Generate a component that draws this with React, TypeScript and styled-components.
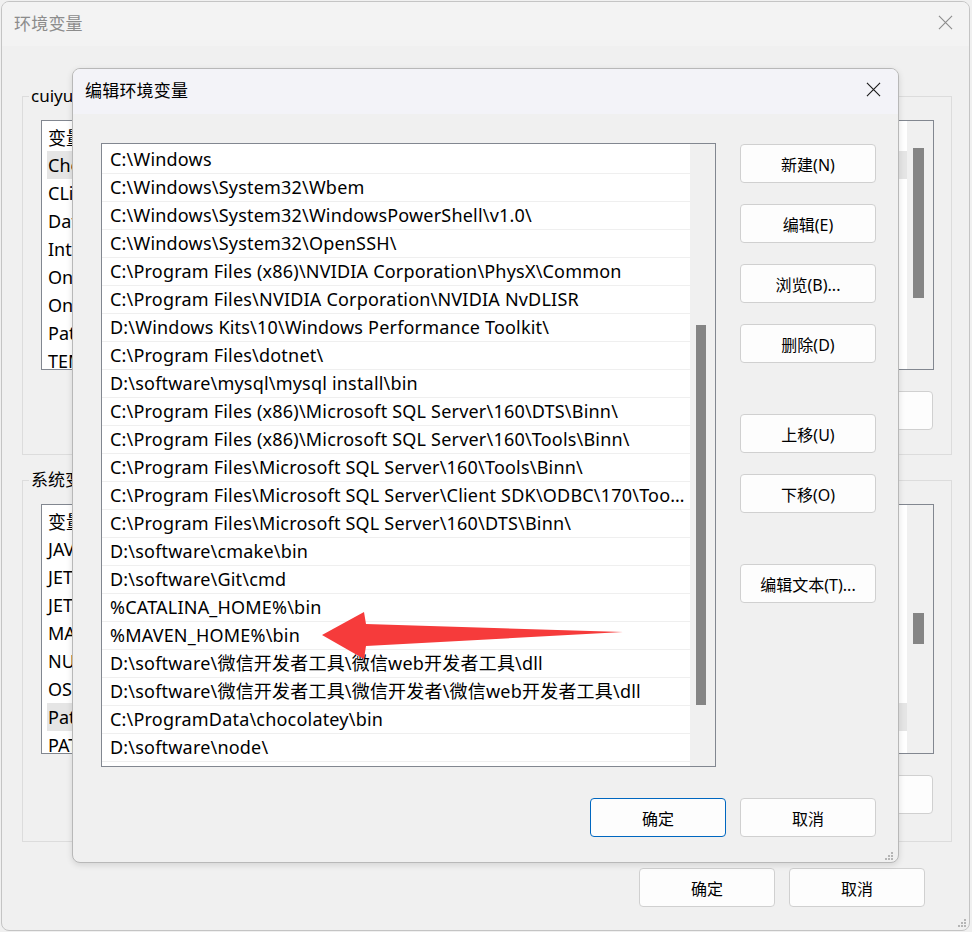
import * as React from 'react'
import styled, { createGlobalStyle } from 'styled-components'

const FONT = '"Noto Sans", "Noto Sans CJK SC", sans-serif'

const GlobalStyle = createGlobalStyle`
  html, body {
    margin: 0;
    padding: 0;
    background: #f0f0f0;
  }
  body {
    font-family: ${FONT};
    color: #000;
  }
  * { box-sizing: border-box; }
`

const Screen = styled.div`
  position: relative;
  width: 972px;
  height: 932px;
  overflow: hidden;
  padding: 1px 0 0 1px;
  background: #f0f0f0;
`

// ---------- outer window (环境变量) ----------

const OuterWindow = styled.div`
  width: 969px;
  height: 930px;
  border: 1px solid #c4c4c4;
  border-radius: 8px;
  background: #f0f0f0;
  display: flex;
  flex-direction: column;
  overflow: hidden;
`

const TitleBar = styled.div<{ $tint: string; $h: number; $pr: number }>`
  height: ${(p) => p.$h}px;
  flex: none;
  display: flex;
  align-items: center;
  justify-content: space-between;
  background: ${(p) => p.$tint};
  padding: 0 ${(p) => p.$pr}px 4px 12px;
`

const TitleText = styled.span<{ $color: string }>`
  font-size: 17px;
  color: ${(p) => p.$color};
  letter-spacing: 0.2px;
`

const CloseIcon = ({ color, size }: { color: string; size: number }) => (
  <svg width={size} height={size} viewBox="0 0 16 16">
    <path d="M1 1 L15 15 M15 1 L1 15" stroke={color} strokeWidth="1.2" fill="none" />
  </svg>
)

const OuterBody = styled.div`
  flex: 1;
  display: flex;
  flex-direction: column;
  padding: 50px 17px 0 20px;
`

const Group = styled.div<{ $h: number; $mt: number }>`
  position: relative;
  height: ${(p) => p.$h}px;
  margin-top: ${(p) => p.$mt}px;
  border: 1px solid #dcdcdc;
  padding: 23px 17px 0 18px;
  display: flex;
  flex-direction: column;
`

const Legend = styled.span`
  position: absolute;
  top: -12px;
  left: 6px;
  padding: 0 2px;
  background: #f0f0f0;
  font-size: 17px;
  line-height: 22px;
`

const VarList = styled.div`
  height: 250px;
  flex: none;
  border: 1px solid #828790;
  background: #fff;
  display: flex;
`

const VarRows = styled.div`
  flex: 1;
  padding: 2px 0 0 5px;
  overflow: hidden;
`

const VarRow = styled.div<{ $selected?: boolean }>`
  height: 28px;
  display: flex;
  align-items: center;
  font-size: 18px;
  padding-left: 1px;
  background: ${(p) => (p.$selected ? '#e5e5e5' : 'transparent')};
  white-space: nowrap;
`

const VarName = styled.span`
  width: 330px;
`

const Track = styled.div<{ $w: number }>`
  width: ${(p) => p.$w}px;
  flex: none;
  background: #f0f0f0;
  position: relative;
`

const Thumb = styled.div<{ $left: number; $width: number }>`
  position: absolute;
  left: ${(p) => p.$left}px;
  width: ${(p) => p.$width}px;
  background: #858585;
`

const GroupButtons = styled.div`
  display: flex;
  justify-content: flex-end;
  gap: 14px;
  margin-top: 21px;
  padding-right: 1px;
`

const Btn = styled.button<{ $primary?: boolean }>`
  width: 136px;
  height: 39px;
  flex: none;
  border: 1px solid ${(p) => (p.$primary ? '#0067c0' : '#d0d0d0')};
  border-radius: 4px;
  background: #fdfdfd;
  font-family: ${FONT};
  font-size: 16px;
  color: #000;
  padding: 0;
  cursor: default;
`

const OuterFooter = styled.div`
  display: flex;
  justify-content: flex-end;
  gap: 14px;
  margin-top: 26px;
  padding-right: 27px;
`

// ---------- inner dialog (编辑环境变量) ----------

const Dialog = styled.div`
  position: absolute;
  left: 72px;
  top: 68px;
  width: 827px;
  height: 795px;
  border: 1px solid #b8b8b8;
  border-radius: 8px;
  background: #f0f0f0;
  box-shadow: 0 2px 6px rgba(0, 0, 0, 0.12);
  display: flex;
  flex-direction: column;
  overflow: hidden;
`

const DialogBody = styled.div`
  flex: 1;
  padding: 29px 22px 0 28px;
  display: flex;
  flex-direction: column;
`

const DialogMain = styled.div`
  display: flex;
  gap: 24px;
`

const PathList = styled.div`
  width: 615px;
  height: 624px;
  border: 1px solid #828790;
  background: #fff;
  display: flex;
`

const PathRows = styled.div`
  flex: 1;
  min-width: 0;
  padding-top: 2px;
  overflow: hidden;
`

const PathRow = styled.div`
  height: 28px;
  border-bottom: 1px solid #efefef;
  padding: 0 4px 0 8px;
  font-size: 18px;
  letter-spacing: 0.2px;
  white-space: nowrap;
  overflow: hidden;
  text-overflow: ellipsis;
  line-height: 27px;
`

const SideButtons = styled.div`
  display: flex;
  flex-direction: column;
  padding-top: 1px;
`

const SideBtn = styled(Btn)<{ $mt: number }>`
  margin-top: ${(p) => p.$mt}px;
`

const DialogFooter = styled.div`
  display: flex;
  justify-content: flex-end;
  gap: 14px;
  margin-top: 31px;
`

const Grip = styled.svg`
  position: absolute;
  width: 10px;
  height: 10px;
`

const GripDots = ({ style }: { style: React.CSSProperties }) => (
  <Grip viewBox="0 0 10 10" style={style}>
    {[
      [7, 1],
      [4, 4],
      [7, 4],
      [1, 7],
      [4, 7],
      [7, 7],
    ].map(([x, y]) => (
      <rect key={`${x}-${y}`} x={x} y={y} width="2" height="2" fill="#b5b5b5" />
    ))}
  </Grip>
)

const Arrow = styled.svg`
  position: absolute;
  left: 318px;
  top: 606px;
  width: 310px;
  height: 60px;
`

const userVars = ['变量', 'ChocolateyLastPathUpdate', 'CLion', 'DataGrip', 'IntelliJ IDEA', 'OneDrive', 'OneDriveConsumer', 'Path', 'TEMP']
const sysVars = ['变量', 'JAVA_HOME', 'JETBRAINS_CLIENT_VM', 'JETBRAINSCLIENT_VM_OPTIONS', 'MAVEN_HOME', 'NUMBER_OF_PROCESSORS', 'OS', 'Path', 'PATHEXT']

const paths = [
  'C:\\Windows',
  'C:\\Windows\\System32\\Wbem',
  'C:\\Windows\\System32\\WindowsPowerShell\\v1.0\\',
  'C:\\Windows\\System32\\OpenSSH\\',
  'C:\\Program Files (x86)\\NVIDIA Corporation\\PhysX\\Common',
  'C:\\Program Files\\NVIDIA Corporation\\NVIDIA NvDLISR',
  'D:\\Windows Kits\\10\\Windows Performance Toolkit\\',
  'C:\\Program Files\\dotnet\\',
  'D:\\software\\mysql\\mysql install\\bin',
  'C:\\Program Files (x86)\\Microsoft SQL Server\\160\\DTS\\Binn\\',
  'C:\\Program Files (x86)\\Microsoft SQL Server\\160\\Tools\\Binn\\',
  'C:\\Program Files\\Microsoft SQL Server\\160\\Tools\\Binn\\',
  'C:\\Program Files\\Microsoft SQL Server\\Client SDK\\ODBC\\170\\Tools\\Binn\\',
  'C:\\Program Files\\Microsoft SQL Server\\160\\DTS\\Binn\\',
  'D:\\software\\cmake\\bin',
  'D:\\software\\Git\\cmd',
  '%CATALINA_HOME%\\bin',
  '%MAVEN_HOME%\\bin',
  'D:\\software\\微信开发者工具\\微信web开发者工具\\dll',
  'D:\\software\\微信开发者工具\\微信开发者\\微信web开发者工具\\dll',
  'C:\\ProgramData\\chocolatey\\bin',
  'D:\\software\\node\\',
  '',
]

const VarBox = ({ names, selected, thumbTop, thumbH }: { names: string[]; selected: number; thumbTop: number; thumbH: number }) => (
  <VarList>
    <VarRows>
      {names.map((n, i) => (
        <VarRow key={i} $selected={i === selected}>
          <VarName>{n}</VarName>
          {i === 0 ? '值' : ''}
        </VarRow>
      ))}
    </VarRows>
    <Track $w={26}>
      <Thumb $left={6} $width={11} style={{ top: thumbTop, height: thumbH }} />
    </Track>
  </VarList>
)

export default function App() {
  return (
    <>
      <GlobalStyle />
      <Screen>
        <OuterWindow>
          <TitleBar $tint="#f3f3f3" $h={44} $pr={16}>
            <TitleText $color="#8c8c8c">环境变量</TitleText>
            <CloseIcon color="#8c8c8c" size={15} />
          </TitleBar>
          <OuterBody>
            <Group $h={359} $mt={0}>
              <Legend>cuiyu 的用户变量(U)</Legend>
              <VarBox names={userVars} selected={1} thumbTop={27} thumbH={150} />
              <GroupButtons>
                <Btn>新建(N)...</Btn>
                <Btn>编辑(E)...</Btn>
                <Btn>删除(D)</Btn>
              </GroupButtons>
            </Group>
            <Group $h={362} $mt={25}>
              <Legend>系统变量(S)</Legend>
              <VarBox names={sysVars} selected={7} thumbTop={108} thumbH={31} />
              <GroupButtons>
                <Btn>新建(W)...</Btn>
                <Btn>编辑(I)...</Btn>
                <Btn>删除(L)</Btn>
              </GroupButtons>
            </Group>
            <OuterFooter>
              <Btn>确定</Btn>
              <Btn>取消</Btn>
            </OuterFooter>
          </OuterBody>
        </OuterWindow>
        <GripDots style={{ left: 957, top: 918 }} />

        <Dialog>
          <TitleBar $tint="#f3f3f8" $h={45} $pr={17}>
            <TitleText $color="#000">编辑环境变量</TitleText>
            <CloseIcon color="#1a1a1a" size={15} />
          </TitleBar>
          <DialogBody>
            <DialogMain>
              <PathList>
                <PathRows>
                  {paths.map((p, i) => (
                    <PathRow key={i}>{p}</PathRow>
                  ))}
                </PathRows>
                <Track $w={25}>
                  <Thumb $left={6} $width={10} style={{ top: 181, height: 380 }} />
                </Track>
              </PathList>
              <SideButtons>
                <SideBtn $mt={0}>新建(N)</SideBtn>
                <SideBtn $mt={21}>编辑(E)</SideBtn>
                <SideBtn $mt={21}>浏览(B)...</SideBtn>
                <SideBtn $mt={21}>删除(D)</SideBtn>
                <SideBtn $mt={51}>上移(U)</SideBtn>
                <SideBtn $mt={21}>下移(O)</SideBtn>
                <SideBtn $mt={51}>编辑文本(T)...</SideBtn>
              </SideButtons>
            </DialogMain>
            <DialogFooter>
              <Btn $primary>确定</Btn>
              <Btn>取消</Btn>
            </DialogFooter>
          </DialogBody>
        </Dialog>
        <GripDots style={{ left: 884, top: 851 }} />

        <Arrow viewBox="0 0 310 60">
          <polygon points="4,29 46,6 48,18 305,26 48,40 46,53" fill="#f63b3b" />
        </Arrow>
      </Screen>
    </>
  )
}
